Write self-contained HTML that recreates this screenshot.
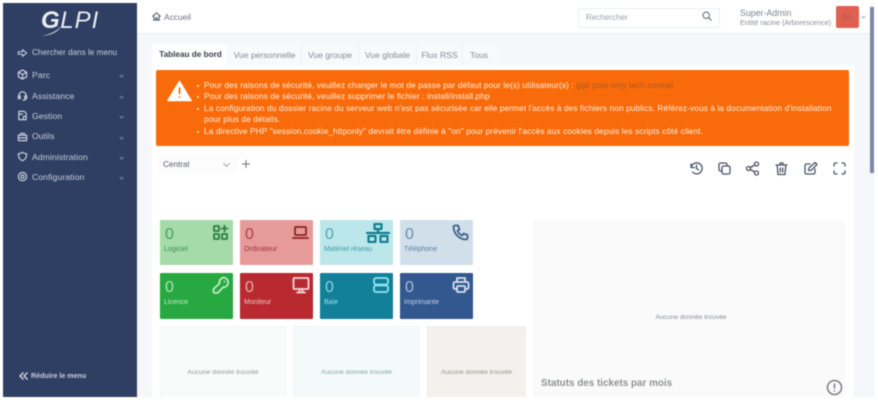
<!DOCTYPE html>
<html><head><meta charset="utf-8"><style>
html,body{margin:0;padding:0;background:#fff}
body{width:878px;height:420px;overflow:hidden;position:relative;font-family:"Liberation Sans",sans-serif}
#w{position:absolute;left:0;top:0;width:878px;height:420px;filter:blur(.45px)}
#w div,#w svg,#w span.a{position:absolute}
.t{white-space:nowrap}
.m{left:32px;font-size:8.6px;color:#c6ccd9;white-space:nowrap;letter-spacing:.1px}
.ch{left:120px;width:2px;height:2px;border-right:1px solid #7c89a3;border-bottom:1px solid #7c89a3;transform:rotate(45deg)}
.tile{border-radius:1px}
.tile .n{left:5px;top:7px;font-size:16px;line-height:16px;white-space:nowrap;opacity:.85}
.tile .l{left:4px;top:26px;font-size:7px;white-space:nowrap}
.tile svg{fill:none;stroke-width:1.8;stroke-linecap:round;stroke-linejoin:round}
.tab{top:45px;height:20px;line-height:20px;font-size:8.6px;color:#858b95;text-align:center;background:#f8f9fb;border-right:1px solid #eff1f4;white-space:nowrap}
.ic{top:161px;width:15px;height:15px;fill:none;stroke:#4a5466;stroke-width:1.3;stroke-linecap:round;stroke-linejoin:round}
.ni{stroke:#c9cfdb;fill:none;stroke-width:1.300;width:11px;height:11px;left:17px;stroke-linecap:round;stroke-linejoin:round}
.no{font-size:6.700px;color:#8f9a96;white-space:nowrap;text-align:center}
.li{left:204px;font-size:8.25px;color:#fdeee0;white-space:nowrap;letter-spacing:.12px}
.bu{left:197px;width:2px;height:2px;border-radius:50%;background:#fde8d4}
</style></head><body><div id="w">
<div style="left:3px;top:3px;width:871px;height:394px;background:#f5f7fb"></div>
<div style="left:3px;top:3px;width:134px;height:394px;background:#2f3f64"></div>
<div style="left:137px;top:3px;width:733px;height:30px;background:#fff;border-bottom:1px solid #e9ecf1"></div>

<div class="t" style="left:41px;top:8px;font-size:24px;line-height:26px;font-style:italic;color:#e9edf3;font-weight:bold;letter-spacing:.6px">G<span style="font-weight:normal;letter-spacing:1px">LPI</span></div>
<svg style="left:42px;top:26px;width:24px;height:11px" viewBox="0 0 24 11"><path d="M0 10C8 8 14 6 19 0C17 5 11 9 0 10Z" fill="#cfd5e0"/></svg>

<svg class="ni" style="top:48px;width:11px;height:10px" viewBox="0 0 12 12"><path d="M1 4.500h5V2l5 4-5 4V7.500H1z"/></svg>
<div class="m" style="top:48px;font-size:8.200px;letter-spacing:0">Chercher dans le menu</div>
<svg class="ni" style="top:69px" viewBox="0 0 12 12"><path d="M6 1l4.500 2.500v5L6 11 1.500 8.500v-5zM1.500 3.500L6 6l4.500-2.500M6 6v5"/></svg><div class="m" style="top:70px">Parc</div><div class="ch" style="top:74px"></div>
<svg class="ni" style="top:90px" viewBox="0 0 12 12"><path d="M2 8V6a4 4 0 0 1 8 0v2M1.500 6.500h2v3h-2zM8.500 6.500h2v3h-2zM9.500 9.500q0 1.500-3 1.500"/></svg><div class="m" style="top:91px">Assistance</div><div class="ch" style="top:95px"></div>
<svg class="ni" style="top:110px" viewBox="0 0 12 12"><path d="M2 1.500h6l2 2v7H2zM7 10.500V7h3M2 4.500h4"/></svg><div class="m" style="top:111px">Gestion</div><div class="ch" style="top:115px"></div>
<svg class="ni" style="top:131px" viewBox="0 0 12 12"><path d="M1.500 4.500h9v6h-9zM4 4.500V2.500h4v2M1.500 7.500h9"/></svg><div class="m" style="top:131px">Outils</div><div class="ch" style="top:136px"></div>
<svg class="ni" style="top:151px" viewBox="0 0 12 12"><path d="M6 1.500c1.500 1 3 1.500 4.500 1.500 0 4-1 6.500-4.500 7.500C2.500 9.500 1.500 7 1.500 3 3 3 4.500 2.500 6 1.500z"/></svg><div class="m" style="top:152px">Administration</div><div class="ch" style="top:156px"></div>
<svg class="ni" style="top:171px" viewBox="0 0 12 12"><circle cx="6" cy="6" r="4.500"/><circle cx="6" cy="6" r="1.800"/></svg><div class="m" style="top:172px">Configuration</div><div class="ch" style="top:176px"></div>
<svg style="left:19px;top:372px;width:9px;height:8px;fill:none;stroke:#d3d8e2;stroke-width:1.400" viewBox="0 0 9 8"><path d="M4.500 .5L1 4l3.500 3.500M8.500 .5L5 4l3.500 3.500"/></svg>
<div class="m" style="left:31px;top:372px;font-size:7.100px;font-weight:bold;letter-spacing:0;color:#c6ccd9">Réduire le menu</div>

<svg style="left:152px;top:12px;width:9px;height:9px;fill:none;stroke:#4c5563;stroke-width:1.100" viewBox="0 0 10 10"><path d="M.5 5L5 1l4.500 4M2 4v5h6V4M4 9V6.500h2V9"/></svg>
<div class="t" style="left:164px;top:12px;font-size:8.4px;color:#6c7380">Accueil</div>

<div style="left:578px;top:8px;width:140px;height:18px;background:#fff;border:1px solid #eceef3;border-radius:2px"></div>
<div class="t" style="left:586px;top:13px;font-size:8.100px;color:#9aa1ab">Rechercher</div>
<svg style="left:702px;top:11px;width:10px;height:10px;fill:none;stroke:#59626f;stroke-width:1" viewBox="0 0 10 10"><circle cx="4.200" cy="4.200" r="3.200"/><path d="M6.600 6.600L9.500 9.500"/></svg>
<div class="t" style="left:740px;top:8px;font-size:8.800px;color:#7c838e">Super-Admin</div>
<div class="t" style="left:740px;top:18px;font-size:7.200px;color:#868d97">Entité racine (Arborescence)</div>
<div style="left:836px;top:6px;width:23px;height:22px;background:#e0604f;border-radius:2px;text-align:center;line-height:22px;font-size:7.500px;color:#b9584c;font-weight:bold">GL</div>
<div style="left:862px;top:15px;width:2px;height:2px;border-right:1px solid #a8aeb8;border-bottom:1px solid #a8aeb8;transform:rotate(45deg)"></div>

<div style="left:870px;top:3px;width:4px;height:394px;background:#f4f5f9"></div>
<div style="left:870px;top:7px;width:4px;height:166px;background:#7d88a8"></div>

<div style="left:152px;top:65px;width:702px;height:332px;background:#fff"></div>
<div style="left:152px;top:44px;width:345px;height:21px;background:#f8f9fb"></div>
<div class="tab" style="left:152px;width:75px;background:#fff;color:#3a404b;font-weight:bold;font-size:8.200px;border:0;padding-left:2px;box-sizing:border-box">Tableau de bord</div>
<div class="tab" style="left:228px;width:73px">Vue personnelle</div>
<div class="tab" style="left:302px;width:56px">Vue groupe</div>
<div class="tab" style="left:359px;width:57px">Vue globale</div>
<div class="tab" style="left:417px;width:45px">Flux RSS</div>
<div class="tab" style="left:463px;width:32px;border:0">Tous</div>

<div style="left:156px;top:70px;width:693px;height:76px;background:#f96b0a;border-radius:2px"></div>
<svg style="left:167px;top:80px;width:25px;height:22px" viewBox="0 0 25 22"><path d="M12.500 1.500L24 20.500H1z" fill="#fff" stroke="#fff" stroke-width="1.500" stroke-linejoin="round"/><path d="M12.500 7.500v6.500M12.500 16.500v1" stroke="#f96b0a" stroke-width="1.800" fill="none"/></svg>
<div class="bu" style="top:85px"></div><div class="li" style="top:81px">Pour des raisons de sécurité, veuillez changer le mot de passe par défaut pour le(s) utilisateur(s) : <span style="color:#a9572a">glpi post-only tech normal</span></div>
<div class="bu" style="top:96px"></div><div class="li" style="top:92px">Pour des raisons de sécurité, veuillez supprimer le fichier : install/install.php</div>
<div class="bu" style="top:108px"></div><div class="li" style="top:104px">La configuration du dossier racine du serveur web n'est pas sécurisée car elle permet l'accès à des fichiers non publics. Référez-vous à la documentation d'installation</div>
<div class="li" style="top:115px">pour plus de détails.</div>
<div class="bu" style="top:131px"></div><div class="li" style="top:127px">La directive PHP "session.cookie_httponly" devrait être définie à "on" pour prévenir l'accès aux cookies depuis les scripts côté client.</div>

<div style="left:158px;top:155px;width:80px;height:18px;background:#fcfcfd"></div>
<div class="t" style="left:163px;top:160px;font-size:8.2px;color:#555c68">Central</div>
<div style="left:224px;top:161px;width:4px;height:4px;border-right:1px solid #a2a7b0;border-bottom:1px solid #a2a7b0;transform:rotate(45deg)"></div>
<svg style="left:242px;top:160px;width:8px;height:8px;stroke:#6b7380;stroke-width:1" viewBox="0 0 8 8"><path d="M4 0v8M0 4h8"/></svg>

<svg class="ic" style="left:689px" viewBox="0 0 15 15"><path d="M7.500 4v3.500l2 1.500M2.200 6.500A5.500 5.500 0 1 1 3.500 11M2 3v3.500h3.500" /></svg>
<svg class="ic" style="left:717px" viewBox="0 0 15 15"><rect x="5" y="5" width="8" height="8" rx="1.500"/><path d="M10 5V3.500A1.500 1.500 0 0 0 8.500 2h-5A1.500 1.500 0 0 0 2 3.500v5A1.500 1.500 0 0 0 3.500 10H5"/></svg>
<svg class="ic" style="left:745px" viewBox="0 0 15 15"><circle cx="3.500" cy="7.500" r="2"/><circle cx="11.500" cy="3" r="2"/><circle cx="11.500" cy="12" r="2"/><path d="M5.300 6.500l4.400-2.500M5.300 8.500l4.400 2.500"/></svg>
<svg class="ic" style="left:774px" viewBox="0 0 15 15"><path d="M2 4h11M6 4V2h3v2M3.200 4l.8 9.500h7l.8-9.500M6.300 7v4M8.700 7v4"/></svg>
<svg class="ic" style="left:803px" viewBox="0 0 15 15"><path d="M7 3H3.500A1.500 1.500 0 0 0 2 4.500v7A1.500 1.500 0 0 0 3.500 13h7a1.500 1.500 0 0 0 1.500-1.500V8M5.500 9.500L6 7l6-5.500L14 3.500 8 9.500z"/></svg>
<svg class="ic" style="left:832px" viewBox="0 0 15 15"><path d="M2 5V3.500A1.500 1.500 0 0 1 3.500 2H5M10 2h1.500A1.500 1.500 0 0 1 13 3.500V5M13 10v1.500a1.500 1.500 0 0 1-1.500 1.500H10M5 13H3.500A1.500 1.500 0 0 1 2 11.500V10"/></svg>

<div class="tile" style="left:160px;top:220px;width:73px;height:45px;background:#a5dba8;color:#3f8f55"><div class="n">0</div><div class="l">Logiciel</div>
<svg style="left:52px;top:4px;width:17px;height:17px;stroke:#2b7f44" viewBox="0 0 17 17"><rect x="2" y="2" width="5" height="5" rx=".5"/><rect x="2" y="10" width="5" height="5" rx=".5"/><rect x="10" y="10" width="5" height="5" rx=".5"/><path d="M12.500 1.500v6M9.500 4.500h6"/></svg></div>
<div class="tile" style="left:240px;top:220px;width:73px;height:45px;background:#e69a9a;color:#9b3438"><div class="n">0</div><div class="l">Ordinateur</div>
<svg style="left:52px;top:4px;width:17px;height:17px;stroke:#8f2026" viewBox="0 0 17 17"><rect x="3" y="3" width="11" height="8" rx="1"/><path d="M1 14h15"/></svg></div>
<div class="tile" style="left:320px;top:220px;width:73px;height:45px;background:#bce7ea;color:#3f9aa6"><div class="n">0</div><div class="l">Matériel réseau</div>
<svg style="left:46px;top:3px;width:24px;height:20px;stroke:#127f90;stroke-width:2.200" viewBox="0 0 24 20"><rect x="8.500" y="1" width="7" height="5" rx=".5"/><rect x="2.500" y="13" width="7" height="6" rx=".5"/><rect x="14.500" y="13" width="7" height="6" rx=".5"/><path d="M12 6v4M1 10h22"/></svg></div>
<div class="tile" style="left:400px;top:220px;width:73px;height:45px;background:#d1dfeb;color:#5d7c9d"><div class="n">0</div><div class="l">Téléphone</div>
<svg style="left:52px;top:4px;width:17px;height:17px;stroke:#3d5f8c" viewBox="0 0 17 17"><path d="M3 1.500h3l1.500 4-2 1.300a9 9 0 0 0 4.700 4.700l1.300-2 4 1.500v3a1.500 1.500 0 0 1-1.500 1.500A13 13 0 0 1 1.500 3 1.500 1.500 0 0 1 3 1.500z"/></svg></div>

<div class="tile" style="left:160px;top:273px;width:73px;height:46px;background:#27a840;color:#c5edcd"><div class="n">0</div><div class="l">Licence</div>
<svg style="left:52px;top:3px;width:18px;height:18px;stroke:#bcecc6" viewBox="0 0 18 18"><path d="M11.500 1.500a5 5 0 0 1 1 9.800l-1-.3L5.500 17H2.500l-1-1v-3l6-5.500A5 5 0 0 1 11.500 1.500zM12.500 5.500v.1"/></svg></div>
<div class="tile" style="left:240px;top:273px;width:73px;height:46px;background:#b82a30;color:#f0c3c5"><div class="n">0</div><div class="l">Moniteur</div>
<svg style="left:52px;top:3px;width:18px;height:18px;stroke:#f6d5d6" viewBox="0 0 18 18"><rect x="1.500" y="2" width="15" height="11" rx="1"/><path d="M5 16.500h8M7.500 13v3.500M10.500 13v3.500"/></svg></div>
<div class="tile" style="left:320px;top:273px;width:73px;height:46px;background:#128098;color:#9fe0ea"><div class="n">0</div><div class="l">Baie</div>
<svg style="left:52px;top:3px;width:18px;height:18px;stroke:#8ee5f2" viewBox="0 0 18 18"><rect x="2" y="2" width="14" height="6.500" rx="2"/><rect x="2" y="9.500" width="14" height="6.500" rx="2"/></svg></div>
<div class="tile" style="left:400px;top:273px;width:73px;height:46px;background:#33578f;color:#bfd0e8"><div class="n">0</div><div class="l">Imprimante</div>
<svg style="left:52px;top:3px;width:18px;height:18px;stroke:#d5e0ef" viewBox="0 0 18 18"><path d="M5 6V2h8v4M5 13H3a1.500 1.500 0 0 1-1.500-1.500v-4A1.500 1.500 0 0 1 3 6h12a1.500 1.500 0 0 1 1.500 1.500v4A1.500 1.500 0 0 1 15 13h-2"/><rect x="5" y="10" width="8" height="6" rx="1"/></svg></div>

<div style="left:160px;top:326px;width:126px;height:71px;background:#f9fbfa;border:1px solid #f5f6f6;border-bottom:0;box-sizing:border-box"></div>
<div class="no" style="left:160px;width:126px;top:369px">Aucune donnée trouvée</div>
<div style="left:293px;top:326px;width:127px;height:71px;background:#f4fafa;border:1px solid #f2f6f6;border-bottom:0;box-sizing:border-box"></div>
<div class="no" style="left:293px;width:127px;top:369px;color:#86a6a6">Aucune donnée trouvée</div>
<div style="left:427px;top:326px;width:99px;height:71px;background:#f3f1ed;border-left:1px solid #f0efec;box-sizing:border-box"></div>
<div class="no" style="left:427px;width:99px;top:369px;color:#9c9488">Aucune donnée trouvée</div>

<div style="left:533px;top:220px;width:312px;height:177px;background:#fafafa"></div>
<div class="no" style="left:533px;width:316px;top:314px;color:#8b8e92">Aucune donnée trouvée</div>
<div class="t" style="left:541px;top:378px;font-size:9.900px;font-weight:bold;color:#909296">Statuts des tickets par mois</div>
<svg style="left:826px;top:379px;width:17px;height:17px;fill:none;stroke:#7d7f83;stroke-width:1.500;stroke-linecap:round" viewBox="0 0 17 17"><circle cx="8.500" cy="8.500" r="7"/><path d="M8.500 5v4M8.500 11.800v.2"/></svg>
</div></body></html>
